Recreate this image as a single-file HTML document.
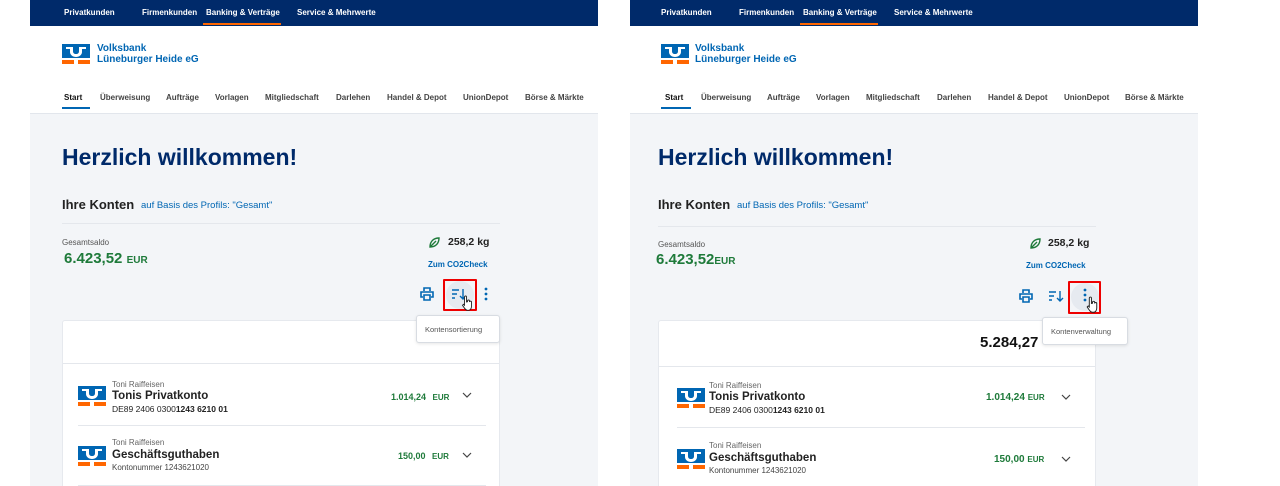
<!DOCTYPE html>
<html><head><meta charset="utf-8"><style>
*{margin:0;padding:0;box-sizing:border-box}
html,body{width:1280px;height:486px;overflow:hidden}
body{background:#fff;position:relative;font-family:"Liberation Sans",sans-serif}
.p{position:absolute;top:0;width:568px;height:486px;background:#f3f5f8;overflow:hidden}
.p *{position:absolute;white-space:nowrap}
.nav{left:0;top:0;width:568px;height:26px;background:#002a6a}
.nav span{top:8px;font-size:8px;font-weight:bold;color:#fff}
.hdr{left:0;top:26px;width:568px;height:88px;background:#fff;border-bottom:1px solid #e2e6ec}
.tab{top:67px;font-size:8px;font-weight:bold;color:#444}
.logo{width:28px;height:20px}
.vb{font-size:10px;font-weight:bold;color:#0066b3;line-height:11px}
.card{background:#fff;border:1px solid #e6e9ee;border-radius:3px}
.sm{font-size:8px;color:#666}
.g{color:#1e7a3a;font-weight:bold}
.sep{height:1px;background:#e4e7ec}
.hov{width:28px;height:28px;border-radius:50%;background:#e6eaf0}
</style></head><body>

<div class="p" style="left:30px">
 <div class="nav"><span style="left:34px">Privatkunden</span><span style="left:112px">Firmenkunden</span><span style="left:176px">Banking &amp; Verträge</span><span style="left:267px">Service &amp; Mehrwerte</span><div style="left:173px;top:23px;width:78px;height:2px;background:#ff6600"></div></div>
 <div class="hdr">
  <svg class="logo" style="left:32px;top:18px" viewBox="0 0 28 20"><rect x="0" y="0" width="28" height="14" fill="#0066b3"/><path d="M4 3h7v4c0 2 1 3 3 3s3-1 3-3V3h7v2h-4v3c0 3-3 5-6 5s-6-2-6-5V5H4z" fill="#fff"/><rect x="0" y="16" width="12" height="4" fill="#ff6600"/><rect x="16" y="16" width="12" height="4" fill="#ff6600"/></svg>
  <div class="vb" style="left:67px;top:17px">Volksbank<br>Lüneburger Heide eG</div>
  <span class="tab" style="left:34px;color:#111">Start</span><div style="left:32px;top:81px;width:28px;height:2px;background:#0066b3"></div>
  <span class="tab" style="left:70px">Überweisung</span><span class="tab" style="left:136px">Aufträge</span><span class="tab" style="left:185px">Vorlagen</span><span class="tab" style="left:235px">Mitgliedschaft</span><span class="tab" style="left:306px">Darlehen</span><span class="tab" style="left:357px">Handel &amp; Depot</span><span class="tab" style="left:433px">UnionDepot</span><span class="tab" style="left:495px">Börse &amp; Märkte</span>
 </div>
 <div style="left:32px;top:144px;font-size:23px;font-weight:bold;color:#002a6a">Herzlich willkommen!</div>
 <div style="left:32px;top:197px;font-size:13px;font-weight:bold;color:#222">Ihre Konten</div>
 <div style="left:111px;top:200px;font-size:9.5px;color:#0066b3">auf Basis des Profils: "Gesamt"</div>
 <div class="sep" style="left:32px;top:223px;width:438px"></div>
 <div class="sm" style="left:32px;top:238px;color:#555">Gesamtsaldo</div>
 <div class="g" style="left:34px;top:250px;font-size:15px">6.423,52 <span style="position:static;font-size:10px">EUR</span></div>
 <svg style="left:398px;top:236px" width="13" height="13" viewBox="0 0 13 13"><path d="M2 11C2 5 6 2 11 2C11 8 7 11 2 11ZM2 11L8 5" fill="none" stroke="#1e7a3a" stroke-width="1.4"/></svg>
 <div style="left:418px;top:236px;font-size:10.5px;font-weight:bold;color:#222">258,2 kg</div>
 <div style="left:398px;top:260px;font-size:8px;font-weight:bold;color:#0066b3">Zum CO2Check</div>
 <div class="hov" style="left:416px;top:281px"></div>
 <svg style="left:390px;top:287px" width="14" height="14" viewBox="0 0 14 14"><path d="M4 4V1h6v3M3 10H1V5h12v5h-2M4 8h6v5H4z" fill="none" stroke="#0066b3" stroke-width="1.6"/></svg>
 <svg style="left:421px;top:287px" width="16" height="14" viewBox="0 0 16 14"><path d="M1 3h7M1 7h5M1 11h3M12 2v10M9 9l3 3 3-3" fill="none" stroke="#0066b3" stroke-width="1.4"/></svg>
 <svg style="left:453px;top:287px" width="6" height="14" viewBox="0 0 6 14"><circle cx="3" cy="2" r="1.4" fill="#0066b3"/><circle cx="3" cy="7" r="1.4" fill="#0066b3"/><circle cx="3" cy="12" r="1.4" fill="#0066b3"/></svg>
 <div class="card" style="left:32px;top:320px;width:438px;height:180px">
  <div class="sep" style="left:0;top:42px;width:436px"></div>
  <svg class="logo" style="left:15px;top:65px" viewBox="0 0 28 20"><rect width="28" height="14" fill="#0066b3"/><path d="M4 3h7v4c0 2 1 3 3 3s3-1 3-3V3h7v2h-4v3c0 3-3 5-6 5s-6-2-6-5V5H4z" fill="#fff"/><rect y="16" width="12" height="4" fill="#ff6600"/><rect x="16" y="16" width="12" height="4" fill="#ff6600"/></svg>
  <div class="sm" style="left:49px;top:59px">Toni Raiffeisen</div>
  <div style="left:49px;top:69px;font-size:11.5px;font-weight:bold;color:#222">Tonis Privatkonto</div>
  <div style="left:49px;top:83px;font-size:8.5px;color:#222">DE89 2406 0300 <b>1243 6210 01</b></div>
  <div class="g" style="left:328px;top:71px;font-size:9px">1.014,24 <span style="position:static;font-size:8px;margin-left:4px">EUR</span></div>
  <svg style="left:399px;top:71px" width="10" height="6" viewBox="0 0 10 6"><path d="M1 1l4 4 4-4" fill="none" stroke="#444" stroke-width="1.2"/></svg>
  <div class="sep" style="left:15px;top:104px;width:408px"></div>
  <svg class="logo" style="left:15px;top:125px" viewBox="0 0 28 20"><rect width="28" height="14" fill="#0066b3"/><path d="M4 3h7v4c0 2 1 3 3 3s3-1 3-3V3h7v2h-4v3c0 3-3 5-6 5s-6-2-6-5V5H4z" fill="#fff"/><rect y="16" width="12" height="4" fill="#ff6600"/><rect x="16" y="16" width="12" height="4" fill="#ff6600"/></svg>
  <div class="sm" style="left:49px;top:117px">Toni Raiffeisen</div>
  <div style="left:49px;top:128px;font-size:11.5px;font-weight:bold;color:#222">Geschäftsguthaben</div>
  <div class="sm" style="left:49px;top:142px;color:#444">Kontonummer 1243621020</div>
  <div class="g" style="left:335px;top:130px;font-size:9px">150,00 <span style="position:static;font-size:8px;margin-left:4px">EUR</span></div>
  <svg style="left:399px;top:131px" width="10" height="6" viewBox="0 0 10 6"><path d="M1 1l4 4 4-4" fill="none" stroke="#444" stroke-width="1.2"/></svg>
  <div class="sep" style="left:15px;top:164px;width:408px"></div>
 </div>
 <div style="left:413px;top:279px;width:34px;height:32px;border:2px solid #e00;border-radius:1px"></div>
 <div style="left:386px;top:315px;width:84px;height:28px;background:#fff;border:1px solid #d8dce2;border-radius:3px;box-shadow:0 1px 3px rgba(0,0,0,.1);font-size:7.5px;color:#555;padding:9px 0 0 8px">Kontensortierung</div>
 <svg style="left:431px;top:295px" width="13" height="16" viewBox="0 0 12 16"><path d="M3 9V2a1 1 0 0 1 2 0v5l1-.2V6a1 1 0 0 1 2 0v1a1 1 0 0 1 2 .3v4c0 2-1 4-3 4H6c-2 0-3-2-5-5l1-1 1 1z" fill="#fff" stroke="#222" stroke-width="0.9"/></svg>
</div>

<div class="p" style="left:630px">
 <div class="nav"><span style="left:31px">Privatkunden</span><span style="left:109px">Firmenkunden</span><span style="left:173px">Banking &amp; Verträge</span><span style="left:264px">Service &amp; Mehrwerte</span><div style="left:170px;top:23px;width:78px;height:2px;background:#ff6600"></div></div>
 <div class="hdr">
  <svg class="logo" style="left:31px;top:18px" viewBox="0 0 28 20"><rect width="28" height="14" fill="#0066b3"/><path d="M4 3h7v4c0 2 1 3 3 3s3-1 3-3V3h7v2h-4v3c0 3-3 5-6 5s-6-2-6-5V5H4z" fill="#fff"/><rect y="16" width="12" height="4" fill="#ff6600"/><rect x="16" y="16" width="12" height="4" fill="#ff6600"/></svg>
  <div class="vb" style="left:65px;top:17px">Volksbank<br>Lüneburger Heide eG</div>
  <span class="tab" style="left:35px;color:#111">Start</span><div style="left:31px;top:81px;width:30px;height:2px;background:#0066b3"></div>
  <span class="tab" style="left:71px">Überweisung</span><span class="tab" style="left:137px">Aufträge</span><span class="tab" style="left:186px">Vorlagen</span><span class="tab" style="left:236px">Mitgliedschaft</span><span class="tab" style="left:307px">Darlehen</span><span class="tab" style="left:358px">Handel &amp; Depot</span><span class="tab" style="left:434px">UnionDepot</span><span class="tab" style="left:495px">Börse &amp; Märkte</span>
 </div>
 <div style="left:28px;top:144px;font-size:23px;font-weight:bold;color:#002a6a">Herzlich willkommen!</div>
 <div style="left:28px;top:197px;font-size:13px;font-weight:bold;color:#222">Ihre Konten</div>
 <div style="left:107px;top:200px;font-size:9.5px;color:#0066b3">auf Basis des Profils: "Gesamt"</div>
 <div class="sep" style="left:28px;top:226px;width:438px"></div>
 <div class="sm" style="left:28px;top:240px;color:#555">Gesamtsaldo</div>
 <div class="g" style="left:26px;top:251px;font-size:15px">6.423,52<span style="position:static;font-size:10px">EUR</span></div>
 <svg style="left:399px;top:237px" width="13" height="13" viewBox="0 0 13 13"><path d="M2 11C2 5 6 2 11 2C11 8 7 11 2 11ZM2 11L8 5" fill="none" stroke="#1e7a3a" stroke-width="1.4"/></svg>
 <div style="left:418px;top:237px;font-size:10.5px;font-weight:bold;color:#222">258,2 kg</div>
 <div style="left:396px;top:261px;font-size:8px;font-weight:bold;color:#0066b3">Zum CO2Check</div>
 <div class="hov" style="left:441px;top:283px"></div>
 <svg style="left:389px;top:289px" width="14" height="14" viewBox="0 0 14 14"><path d="M4 4V1h6v3M3 10H1V5h12v5h-2M4 8h6v5H4z" fill="none" stroke="#0066b3" stroke-width="1.6"/></svg>
 <svg style="left:418px;top:289px" width="16" height="14" viewBox="0 0 16 14"><path d="M1 3h7M1 7h5M1 11h3M12 2v10M9 9l3 3 3-3" fill="none" stroke="#0066b3" stroke-width="1.4"/></svg>
 <svg style="left:452px;top:288px" width="6" height="14" viewBox="0 0 6 14"><circle cx="3" cy="2" r="1.4" fill="#0066b3"/><circle cx="3" cy="7" r="1.4" fill="#0066b3"/><circle cx="3" cy="12" r="1.4" fill="#0066b3"/></svg>
 <div class="card" style="left:28px;top:320px;width:438px;height:180px">
  <div style="left:321px;top:13px;font-size:15px;font-weight:bold;color:#111">5.284,27</div>
  <div class="sep" style="left:0;top:45px;width:436px"></div>
  <svg class="logo" style="left:18px;top:67px" viewBox="0 0 28 20"><rect width="28" height="14" fill="#0066b3"/><path d="M4 3h7v4c0 2 1 3 3 3s3-1 3-3V3h7v2h-4v3c0 3-3 5-6 5s-6-2-6-5V5H4z" fill="#fff"/><rect y="16" width="12" height="4" fill="#ff6600"/><rect x="16" y="16" width="12" height="4" fill="#ff6600"/></svg>
  <div class="sm" style="left:50px;top:60px">Toni Raiffeisen</div>
  <div style="left:50px;top:70px;font-size:11.5px;font-weight:bold;color:#222">Tonis Privatkonto</div>
  <div style="left:50px;top:84px;font-size:8.5px;color:#222">DE89 2406 0300 <b>1243 6210 01</b></div>
  <div class="g" style="left:327px;top:71px;font-size:10px">1.014,24 <span style="position:static;font-size:8px">EUR</span></div>
  <svg style="left:402px;top:73px" width="10" height="6" viewBox="0 0 10 6"><path d="M1 1l4 4 4-4" fill="none" stroke="#444" stroke-width="1.2"/></svg>
  <div class="sep" style="left:18px;top:106px;width:408px"></div>
  <svg class="logo" style="left:18px;top:128px" viewBox="0 0 28 20"><rect width="28" height="14" fill="#0066b3"/><path d="M4 3h7v4c0 2 1 3 3 3s3-1 3-3V3h7v2h-4v3c0 3-3 5-6 5s-6-2-6-5V5H4z" fill="#fff"/><rect y="16" width="12" height="4" fill="#ff6600"/><rect x="16" y="16" width="12" height="4" fill="#ff6600"/></svg>
  <div class="sm" style="left:50px;top:120px">Toni Raiffeisen</div>
  <div style="left:50px;top:131px;font-size:11.5px;font-weight:bold;color:#222">Geschäftsguthaben</div>
  <div class="sm" style="left:50px;top:145px;color:#444">Kontonummer 1243621020</div>
  <div class="g" style="left:335px;top:133px;font-size:10px">150,00 <span style="position:static;font-size:8px">EUR</span></div>
  <svg style="left:402px;top:135px" width="10" height="6" viewBox="0 0 10 6"><path d="M1 1l4 4 4-4" fill="none" stroke="#444" stroke-width="1.2"/></svg>
 </div>
 <div style="left:438px;top:281px;width:33px;height:33px;border:2px solid #e00;border-radius:1px"></div>
 <div style="left:412px;top:317px;width:86px;height:28px;background:#fff;border:1px solid #d8dce2;border-radius:3px;box-shadow:0 1px 3px rgba(0,0,0,.1);font-size:7.5px;color:#555;padding:9px 0 0 8px">Kontenverwaltung</div>
 <svg style="left:456px;top:296px" width="13" height="17" viewBox="0 0 12 16"><path d="M3 9V2a1 1 0 0 1 2 0v5l1-.2V6a1 1 0 0 1 2 0v1a1 1 0 0 1 2 .3v4c0 2-1 4-3 4H6c-2 0-3-2-5-5l1-1 1 1z" fill="#fff" stroke="#222" stroke-width="0.9"/></svg>
</div>
</body></html>
